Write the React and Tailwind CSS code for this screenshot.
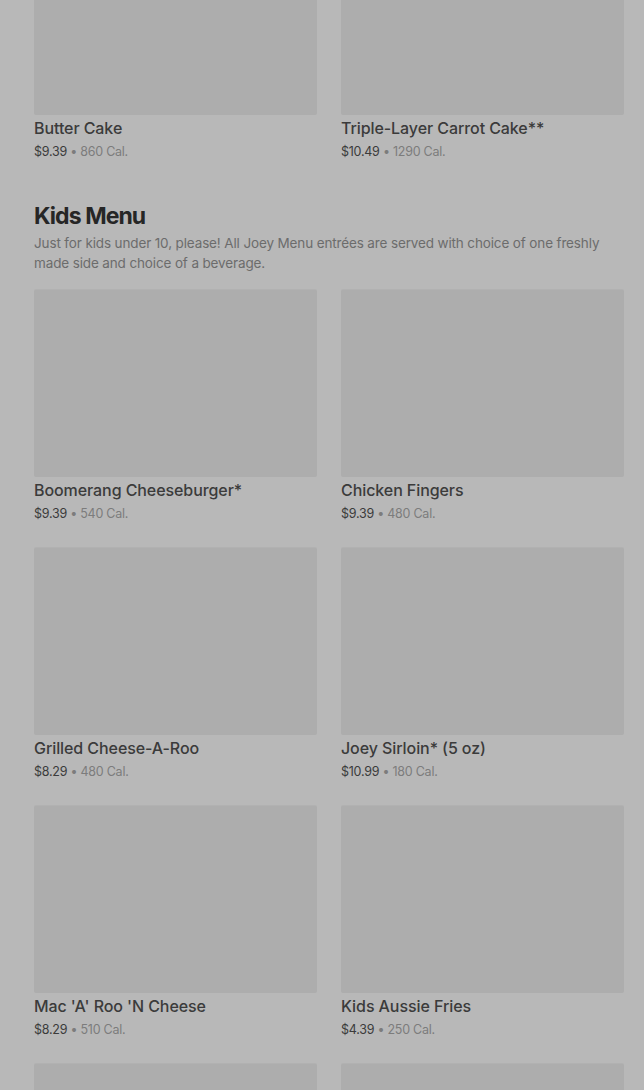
import React from 'react';

const topRow = [
  { nome: 'Butter Cake', preco: '$9.39', cal: '860 Cal.' },
  { nome: 'Triple-Layer Carrot Cake**', preco: '$10.49', cal: '1290 Cal.' },
];

const kids = [
  { nome: 'Boomerang Cheeseburger*', preco: '$9.39', cal: '540 Cal.' },
  { nome: 'Chicken Fingers', preco: '$9.39', cal: '480 Cal.' },
  { nome: "Grilled Cheese-A-Roo", preco: '$8.29', cal: '480 Cal.' },
  { nome: 'Joey Sirloin* (5 oz)', preco: '$10.99', cal: '180 Cal.' },
  { nome: "Mac 'A' Roo 'N Cheese", preco: '$8.29', cal: '510 Cal.' },
  { nome: 'Kids Aussie Fries', preco: '$4.39', cal: '250 Cal.' },
];

function Item({ item }) {
  return (
    <div className="flex flex-col">
      <div className="h-[188px] rounded-[2px] bg-[#adadad] border-t border-[#b1b1b1]"></div>
      <h3 className="mt-[2px] text-[16px] leading-[22px] font-medium tracking-[-0.005em] text-[#3b3b3b]">{item.nome}</h3>
      <p className="mt-[3px] text-[12.5px] leading-[20px] tracking-[-0.02em] text-[#3b3b3b]">
        {item.preco} <span className="text-[#7c7c7c]">• {item.cal}</span>
      </p>
    </div>
  );
}

export default function App() {
  return (
    <div className="bg-[#b8b8b8] overflow-hidden h-[1090px]" style={{ fontFamily: 'Inter, "Noto Sans", sans-serif' }}>
      <div className="pl-[34px] pr-[20px]">
        {/* fim da seção anterior */}
        <div className="-mt-[73px] grid grid-cols-2 gap-x-[24px]">
          {topRow.map((item, idx) => <Item key={idx} item={item} />)}
        </div>

        {/* KIDS MENU */}
        <div className="mt-[40px]">
          <h2 className="text-[23px] leading-[28px] font-bold tracking-[-0.04em] text-[#262626]">Kids Menu</h2>
          <p className="mt-[3px] text-[13.5px] leading-[20px] text-[#6c6c6c] tracking-[-0.01em]">
            Just for kids under 10, please! All Joey Menu entrées are served with choice of one freshly made side and choice of a beverage.
          </p>
        </div>

        <div className="mt-[16px] grid grid-cols-2 gap-x-[24px] gap-y-[23px]">
          {kids.map((item, idx) => <Item key={idx} item={item} />)}
          <div className="h-[188px] rounded-[2px] bg-[#adadad] border-t border-[#b1b1b1]"></div>
          <div className="h-[188px] rounded-[2px] bg-[#adadad] border-t border-[#b1b1b1]"></div>
        </div>
      </div>
    </div>
  );
}
